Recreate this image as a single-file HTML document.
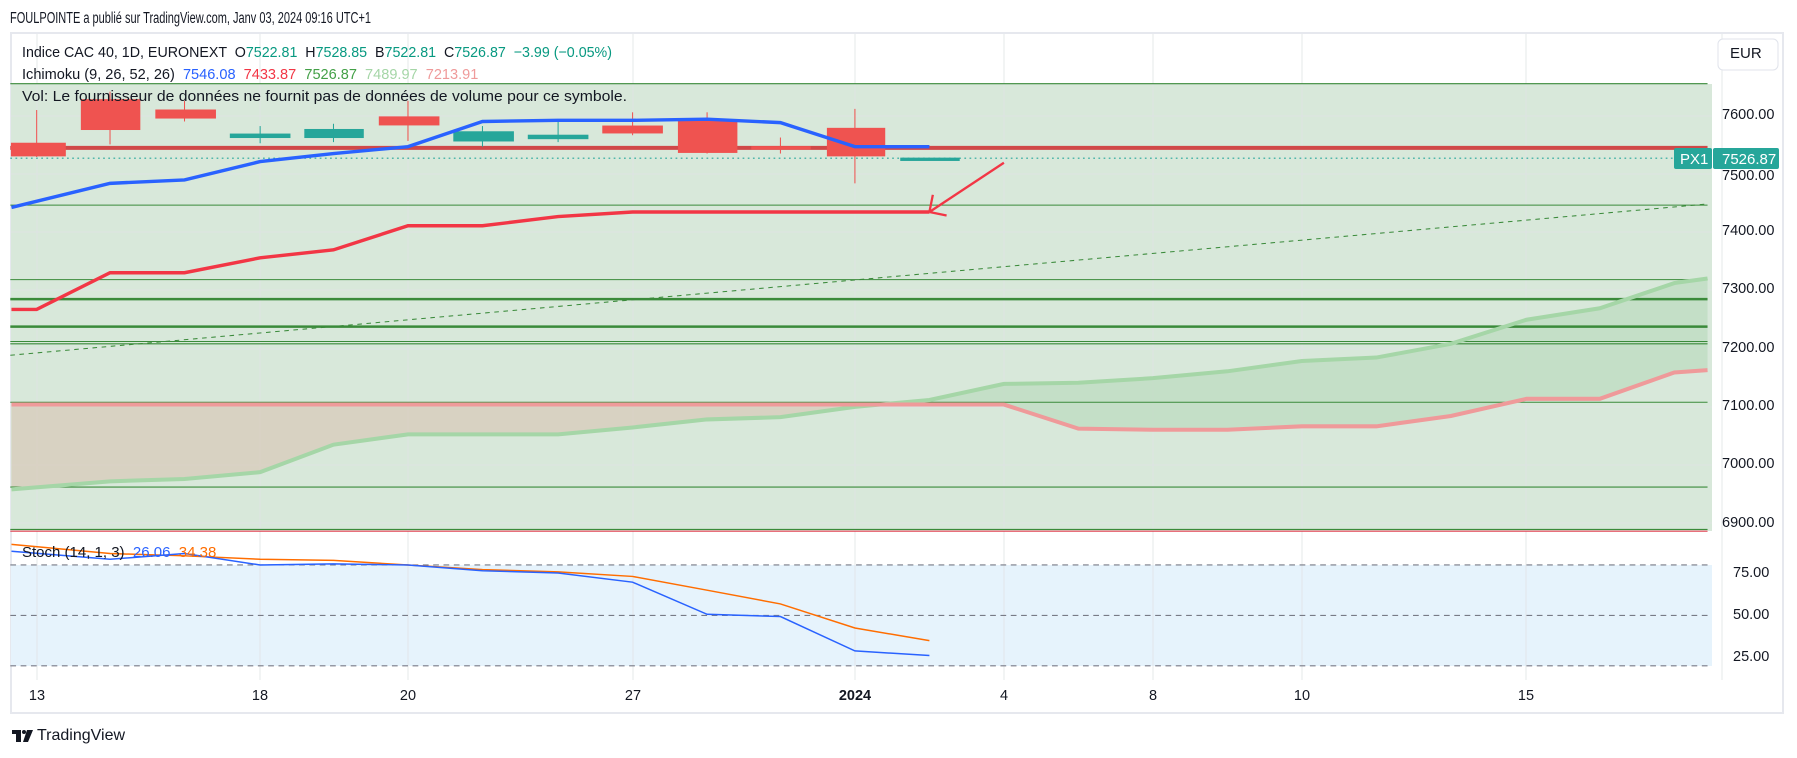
<!DOCTYPE html>
<html><head><meta charset="utf-8"><style>
body{margin:0;width:1797px;height:758px;background:#fff;position:relative;overflow:hidden;font-family:"Liberation Sans",sans-serif;}
.t{position:absolute;white-space:nowrap;font-size:15px;color:#131722;transform-origin:0 0;}
.ax{position:absolute;font-size:14.5px;color:#131722;left:1722px;}
.dt{position:absolute;top:688px;font-size:14.5px;color:#131722;transform:translateX(-50%);}
</style></head><body>
<div class="t" style="left:10px;top:10px;font-size:15.5px;transform:scaleX(0.71)">FOULPOINTE a publié sur TradingView.com, Janv 03, 2024 09:16 UTC+1</div>
<svg width="1797" height="758" style="position:absolute;left:0;top:0">
<rect x="11" y="33" width="1772" height="680" fill="#fff" stroke="#e6e8ee" stroke-width="2"/>
<rect x="11" y="84" width="1701" height="447" fill="#d8e8da"/>
<rect x="11" y="565" width="1701" height="101" fill="#e6f3fc"/>
<g stroke="#e0e3e6" stroke-width="1" opacity="0.8">
<line x1="37" y1="34" x2="37" y2="680"/><line x1="260" y1="34" x2="260" y2="680"/><line x1="408" y1="34" x2="408" y2="680"/><line x1="633" y1="34" x2="633" y2="680"/><line x1="855" y1="34" x2="855" y2="680"/><line x1="1004" y1="34" x2="1004" y2="680"/><line x1="1153" y1="34" x2="1153" y2="680"/><line x1="1302" y1="34" x2="1302" y2="680"/><line x1="1526" y1="34" x2="1526" y2="680"/><line x1="1722" y1="34" x2="1722" y2="680"/>
<line x1="11" y1="116" x2="1712" y2="116"/><line x1="11" y1="174" x2="1712" y2="174"/><line x1="11" y1="232" x2="1712" y2="232"/><line x1="11" y1="290" x2="1712" y2="290"/><line x1="11" y1="349" x2="1712" y2="349"/><line x1="11" y1="407" x2="1712" y2="407"/><line x1="11" y1="465" x2="1712" y2="465"/><line x1="11" y1="523" x2="1712" y2="523"/>
</g>
<g transform="scale(1.146)">
<path d="M10,427 L96,420 161,418 227,412 291,388 356,379 421,379 487,379 552,373 617,366 681,364 746,355 780,353 L780,353 10,353Z" fill="#d8c9b8" opacity="0.7"/>
<path d="M780,353 L811,349 876,335 941,334 1006,330 1071,324 1136,315 1201,312 1266,300 1332,279 1396,269 1461,247 1490,243 L1490,323 1461,325 1396,348 1332,348 1266,363 1201,372 1136,372 1071,375 1006,375 941,374 876,353Z" fill="#bcdcbf" opacity="0.7"/>
<g stroke="#3a8a3a">
<line x1="9" y1="73" x2="1490" y2="73" stroke-width="1"/>
<line x1="9" y1="179" x2="1490" y2="179" stroke-width="0.9"/>
<line x1="9" y1="244" x2="1490" y2="244" stroke-width="0.9"/>
<line x1="9" y1="261" x2="1490" y2="261" stroke-width="2.2"/>
<line x1="9" y1="285" x2="1490" y2="285" stroke-width="2.2"/>
<line x1="9" y1="298" x2="1490" y2="298" stroke-width="0.9"/>
<line x1="9" y1="300" x2="1490" y2="300" stroke-width="0.9"/>
<line x1="9" y1="351" x2="1490" y2="351" stroke-width="0.9"/>
<line x1="9" y1="425" x2="1490" y2="425" stroke-width="0.9"/>
<line x1="9" y1="462" x2="1490" y2="462" stroke-width="0.9"/>
<line x1="9" y1="310" x2="1490" y2="178" stroke-width="0.9" stroke-dasharray="4,4"/>
</g>
<line x1="9" y1="463.5" x2="1490" y2="463.5" stroke="#e04050" stroke-width="1"/>
<polyline fill="none" stroke="#a5d6a7" stroke-width="3.5" points="10,427 96,420 161,418 227,412 291,388 356,379 421,379 487,379 552,373 617,366 681,364 746,355 811,349 876,335 941,334 1006,330 1071,324 1136,315 1201,312 1266,300 1332,279 1396,269 1461,247 1490,243"/>
<polyline fill="none" stroke="#ef9a9a" stroke-width="3.5" points="10,353 876,353 941,374 1006,375 1071,375 1136,372 1201,372 1266,363 1332,348 1396,348 1461,325 1490,323"/>
<line x1="9" y1="129" x2="1490" y2="129" stroke="#d04848" stroke-width="3.5"/>
<line x1="9" y1="138" x2="1490" y2="138" stroke="#26a69a" stroke-width="1" stroke-dasharray="1.5,3"/>
<g fill="#ef5350" stroke="#ef5350" stroke-width="0.9">
<line x1="32" y1="96" x2="32" y2="137"/><rect x="10" y="125" width="47" height="11"/>
<line x1="96" y1="80" x2="96" y2="126"/><rect x="71" y="87" width="51" height="26"/>
<line x1="161" y1="88" x2="161" y2="106"/><rect x="136" y="96" width="52" height="7"/>
<line x1="356" y1="88" x2="356" y2="123"/><rect x="331" y="102" width="52" height="7"/>
<line x1="552" y1="98" x2="552" y2="118"/><rect x="526" y="110" width="52" height="6"/>
<line x1="617" y1="98" x2="617" y2="134"/><rect x="592" y="105" width="51" height="28"/>
<line x1="681" y1="120" x2="681" y2="134"/><rect x="656" y="128" width="51" height="2"/>
<line x1="746" y1="95" x2="746" y2="160"/><rect x="722" y="112" width="50" height="24"/>
</g>
<g fill="#26a69a" stroke="#26a69a" stroke-width="0.9">
<line x1="227" y1="110" x2="227" y2="125"/><rect x="201" y="117" width="52" height="3"/>
<line x1="291" y1="108" x2="291" y2="124"/><rect x="266" y="113" width="51" height="7"/>
<line x1="421" y1="110" x2="421" y2="128"/><rect x="396" y="115" width="52" height="8"/>
<line x1="487" y1="106" x2="487" y2="124"/><rect x="461" y="118" width="52" height="3"/>
<rect x="786" y="138" width="51" height="2"/>
</g>
<polyline fill="none" stroke="#2962ff" stroke-width="3" points="10,181 96,160 161,157 227,141 291,134 356,128 421,106 487,105 552,105 617,104 681,107 746,128 811,128"/>
<polyline fill="none" stroke="#f23645" stroke-width="3" points="10,270 32,270 96,238 161,238 227,225 291,218 356,197 421,197 487,189 552,185 811,185"/>
<g stroke="#f23645" stroke-width="2" fill="none"><line x1="876" y1="142" x2="811" y2="185"/><line x1="811" y1="185" x2="814" y2="170"/><line x1="811" y1="185" x2="826" y2="188"/></g>
<g stroke="#787b86" stroke-width="1" stroke-dasharray="5,4"><line x1="9" y1="493" x2="1490" y2="493"/><line x1="9" y1="537" x2="1490" y2="537"/><line x1="9" y1="581" x2="1490" y2="581"/></g>
<polyline fill="none" stroke="#ff6d00" stroke-width="1.3" points="10,475 96,483 161,485 227,488 291,489 356,493 421,497 487,499 552,503 617,515 681,527 746,548 811,559"/>
<polyline fill="none" stroke="#2962ff" stroke-width="1.3" points="10,481 96,488 161,483 227,493 291,492 356,493 421,498 487,500 552,508 617,536 681,538 746,568 811,572"/>
</g>
<rect x="1674" y="148" width="38" height="21" rx="2" fill="#26a69a"/>
<rect x="1713" y="148" width="66" height="21" rx="2" fill="#26a69a"/>
<text x="1680" y="164" font-size="15" fill="#fff" font-family="Liberation Sans">PX1</text>
<text x="1722" y="164" font-size="15" fill="#fff" font-family="Liberation Sans">7526.87</text>
<rect x="1718" y="39" width="60" height="31" rx="5" fill="#fff" stroke="#e0e3eb"/>
<g fill="#131722"><rect x="12" y="730" width="9" height="4"/><rect x="16" y="730" width="5" height="12"/><circle cx="24" cy="732" r="2"/><path d="M27 730h6l-5 12h-5z"/></g>
</svg>
<div class="t" style="left:1730px;top:45px">EUR</div>
<div class="t" style="left:22px;top:44px;transform:scaleX(0.95)">Indice CAC 40, 1D, EURONEXT &nbsp;O<span style="color:#089981">7522.81</span> &nbsp;H<span style="color:#089981">7528.85</span> &nbsp;B<span style="color:#089981">7522.81</span> &nbsp;C<span style="color:#089981">7526.87</span> &nbsp;<span style="color:#089981">−3.99 (−0.05%)</span></div>
<div class="t" style="left:22px;top:66px;transform:scaleX(0.97)">Ichimoku (9, 26, 52, 26) &nbsp;<span style="color:#2962ff">7546.08</span> &nbsp;<span style="color:#f23645">7433.87</span> &nbsp;<span style="color:#43a047">7526.87</span> &nbsp;<span style="color:#a5d6a7">7489.97</span> &nbsp;<span style="color:#ef9a9a">7213.91</span></div>
<div class="t" style="left:22px;top:88px;transform:scaleX(1.05)">Vol: Le fournisseur de données ne fournit pas de données de volume pour ce symbole.</div>
<div class="t" style="left:22px;top:544px">Stoch (14, 1, 3) &nbsp;<span style="color:#2962ff">26.06</span> &nbsp;<span style="color:#ff6d00">34.38</span></div>
<div class="ax" style="top:107px">7600.00</div>
<div class="ax" style="top:223px">7400.00</div>
<div class="ax" style="top:281px">7300.00</div>
<div class="ax" style="top:340px">7200.00</div>
<div class="ax" style="top:398px">7100.00</div>
<div class="ax" style="top:456px">7000.00</div>
<div class="ax" style="top:515px">6900.00</div>
<div class="ax" style="top:168px;clip-path:inset(2px 0 0 0)">7500.00</div>
<div class="ax" style="top:565px;left:1733px">75.00</div>
<div class="ax" style="top:607px;left:1733px">50.00</div>
<div class="ax" style="top:649px;left:1733px">25.00</div>
<div class="dt" style="left:37px">13</div>
<div class="dt" style="left:260px">18</div>
<div class="dt" style="left:408px">20</div>
<div class="dt" style="left:633px">27</div>
<div class="dt" style="left:855px;font-weight:bold">2024</div>
<div class="dt" style="left:1004px">4</div>
<div class="dt" style="left:1153px">8</div>
<div class="dt" style="left:1302px">10</div>
<div class="dt" style="left:1526px">15</div>
<div class="t" style="left:37px;top:727px;font-size:16px">TradingView</div>
</body></html>
